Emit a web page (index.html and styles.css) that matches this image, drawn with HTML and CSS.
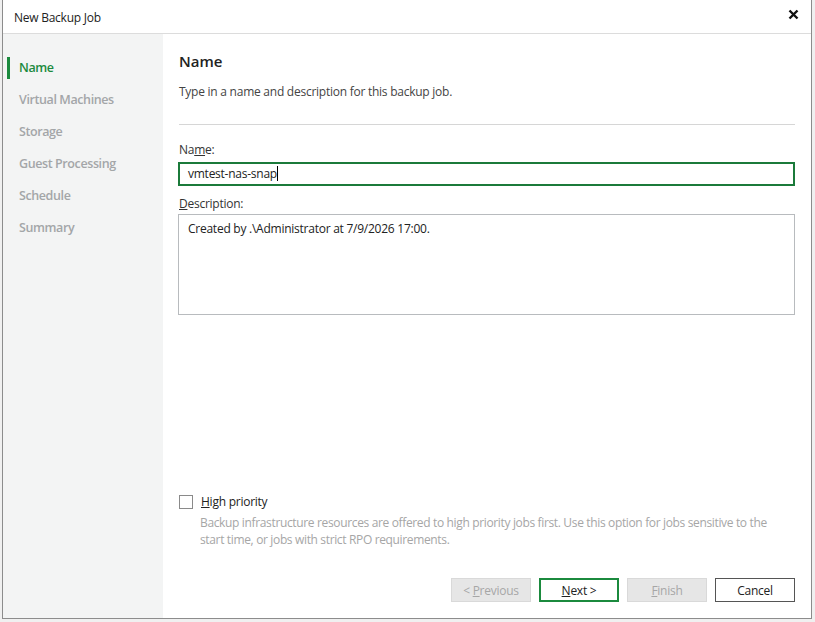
FILE: index.html
```html
<!DOCTYPE html>
<html lang="en">

<head>
    <meta charset="UTF-8">
    <title>New Backup Job</title>
    <link rel="stylesheet" href="styles.css">
</head>

<body>
    <div class="window">
        <div class="titlebar">
            <span class="title">New Backup Job</span>
            <span class="close">
                <svg width="11" height="11" viewBox="0 0 11 11">
                    <path d="M1.5 1.5 L9.5 9.5 M9.5 1.5 L1.5 9.5" stroke="#111" stroke-width="2.4" />
                </svg>
            </span>
        </div>

        <div class="wizard">
            <div class="steps">
                <div class="step active">Name</div>
                <div class="step">Virtual Machines</div>
                <div class="step">Storage</div>
                <div class="step">Guest Processing</div>
                <div class="step">Schedule</div>
                <div class="step">Summary</div>
            </div>

            <div class="page">
                <div class="header">
                    <h2>Name</h2>
                    <p>Type in a name and description for this backup job.</p>
                </div>

                <div class="form">
                    <label>Na<u>m</u>e:</label>
                    <div class="input focused">vmtest-nas-snap<span class="caret"></span></div>
                    <label><u>D</u>escription:</label>
                    <div class="textarea">Created by .\Administrator at 7/9/2026 17:00.</div>
                </div>

                <div class="priority">
                    <div class="check-row">
                        <span class="checkbox"></span>
                        <span><u>H</u>igh priority</span>
                    </div>
                    <p class="hint">Backup infrastructure resources are offered to high priority jobs first. Use this option for jobs sensitive to the start time, or jobs with strict RPO requirements.</p>
                </div>

                <div class="buttons">
                    <button class="disabled">&lt; <u>P</u>revious</button>
                    <button class="primary"><u>N</u>ext &gt;</button>
                    <button class="disabled"><u>F</u>inish</button>
                    <button>Cancel</button>
                </div>
            </div>
        </div>
    </div>
</body>

</html>
```

FILE: styles.css
```css
body {
    margin: 0;
    background-color: #f0f0f0;
    font-family: "Open Sans", "Noto Sans", sans-serif;
    font-size: 12px;
    letter-spacing: -0.25px;
    color: #222;
}

.window {
    margin-left: 2px;
    width: 808px;
    height: 618px;
    border: 1px solid #8c8c8c;
    border-top: none;
    background-color: white;
    display: flex;
    flex-direction: column;
}

.titlebar {
    height: 33px;
    border-bottom: 1px solid #dcdcdc;
    display: flex;
    align-items: center;
    justify-content: space-between;
    padding: 0 12px 0 11px;
}

.title {
    font-size: 12px;
    color: #222;
    margin-top: 2px;
}

.close {
    display: flex;
    margin-top: -4px;
}

.wizard {
    flex: 1;
    display: flex;
}

.steps {
    width: 160px;
    background-color: #f3f4f4;
    padding-top: 23px;
}

.step {
    height: 22px;
    line-height: 22px;
    margin-bottom: 10px;
    margin-left: 4px;
    padding-left: 9px;
    font-size: 12.5px;
    font-weight: 600;
    letter-spacing: -0.4px;
    color: #a3a6a8;
    border-left: 3px solid transparent;
}

.step.active {
    color: #1b8a3e;
    border-left-color: #1b8a3e;
}

.page {
    flex: 1;
    display: flex;
    flex-direction: column;
    padding: 0 16px 16px 16px;
}

.header {
    border-bottom: 1px solid #d6d6d6;
    height: 90px;
}

.header h2 {
    margin: 17px 0 0 0;
    font-size: 15px;
    font-weight: 600;
    letter-spacing: 0;
    color: #222;
}

.header p {
    margin: 12px 0 0 0;
    color: #444;
}

.form {
    padding-top: 16px;
}

label {
    display: block;
    color: #333;
    margin-bottom: 4px;
}

.input {
    height: 20px;
    line-height: 20px;
    border: 2px solid #1b7a3a;
    padding: 0 8px;
    margin-bottom: 9px;
    margin-left: -1px;
}

.caret {
    display: inline-block;
    width: 1px;
    height: 15px;
    background-color: #000;
    vertical-align: -3px;
}

.textarea {
    height: 89px;
    margin-top: -2px;
    border: 1px solid #b8bbbe;
    padding: 5px 9px;
    margin-left: -1px;
}

.priority {
    margin-top: auto;
}

.check-row {
    display: flex;
    align-items: center;
    gap: 8px;
}

.checkbox {
    width: 12px;
    height: 12px;
    border: 1px solid #8a8a8a;
    background-color: white;
}

.hint {
    margin: 4px 20px 0 21px;
    color: #a6a6a6;
    line-height: 17px;
    letter-spacing: -0.35px;
}

.buttons {
    display: flex;
    justify-content: flex-end;
    gap: 8px;
    margin-top: 30px;
}

button {
    width: 80px;
    height: 24px;
    font-family: inherit;
    font-size: 12px;
    letter-spacing: -0.25px;
    background-color: white;
    border: 1px solid #555;
    color: #222;
    padding: 0;
}

button.primary {
    border: 2px solid #1b8a3e;
}

button.disabled {
    background-color: #e6e6e6;
    border-color: #d9d9d9;
    color: #a6a6a6;
}
```
